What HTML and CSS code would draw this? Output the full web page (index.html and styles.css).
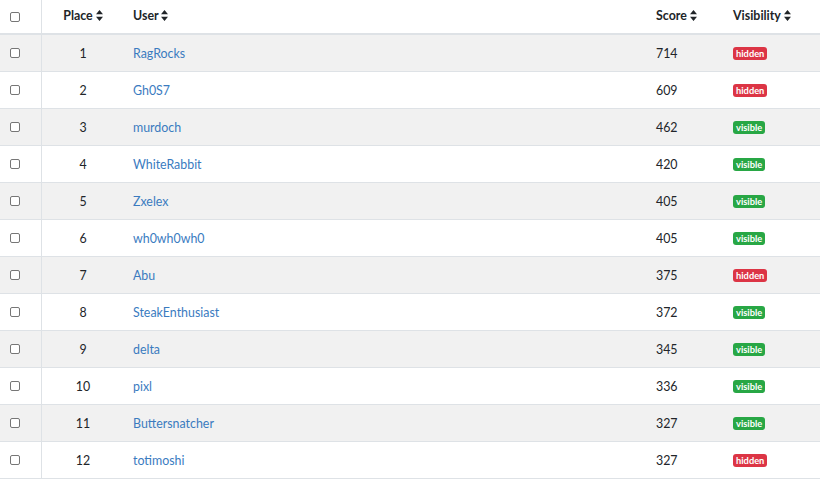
FILE: index.html
```html
<!DOCTYPE html>
<html>
<head>
<meta charset="utf-8">
<link rel="stylesheet" href="styles.css">
</head>
<body>
<table class="board">
  <thead>
    <tr>
      <th class="c-check"><span class="cb"></span></th>
      <th class="c-place">Place <svg class="sort" viewBox="0 0 7 11" width="7" height="11"><path d="M3.5 0 L7 4.3 H0 Z M3.5 11 L7 6.7 H0 Z" fill="#212529"/></svg></th>
      <th class="c-user">User <svg class="sort" viewBox="0 0 7 11" width="7" height="11"><path d="M3.5 0 L7 4.3 H0 Z M3.5 11 L7 6.7 H0 Z" fill="#212529"/></svg></th>
      <th class="c-score">Score <svg class="sort" viewBox="0 0 7 11" width="7" height="11"><path d="M3.5 0 L7 4.3 H0 Z M3.5 11 L7 6.7 H0 Z" fill="#212529"/></svg></th>
      <th class="c-vis">Visibility <svg class="sort" viewBox="0 0 7 11" width="7" height="11"><path d="M3.5 0 L7 4.3 H0 Z M3.5 11 L7 6.7 H0 Z" fill="#212529"/></svg></th>
    </tr>
  </thead>
  <tbody>
    <tr><td class="c-check"><span class="cb"></span></td><td class="c-place">1</td><td class="c-user"><a>RagRocks</a></td><td class="c-score">714</td><td class="c-vis"><span class="badge red">hidden</span></td></tr>
    <tr><td class="c-check"><span class="cb"></span></td><td class="c-place">2</td><td class="c-user"><a>Gh0S7</a></td><td class="c-score">609</td><td class="c-vis"><span class="badge red">hidden</span></td></tr>
    <tr><td class="c-check"><span class="cb"></span></td><td class="c-place">3</td><td class="c-user"><a>murdoch</a></td><td class="c-score">462</td><td class="c-vis"><span class="badge green">visible</span></td></tr>
    <tr><td class="c-check"><span class="cb"></span></td><td class="c-place">4</td><td class="c-user"><a>WhiteRabbit</a></td><td class="c-score">420</td><td class="c-vis"><span class="badge green">visible</span></td></tr>
    <tr><td class="c-check"><span class="cb"></span></td><td class="c-place">5</td><td class="c-user"><a>Zxelex</a></td><td class="c-score">405</td><td class="c-vis"><span class="badge green">visible</span></td></tr>
    <tr><td class="c-check"><span class="cb"></span></td><td class="c-place">6</td><td class="c-user"><a>wh0wh0wh0</a></td><td class="c-score">405</td><td class="c-vis"><span class="badge green">visible</span></td></tr>
    <tr><td class="c-check"><span class="cb"></span></td><td class="c-place">7</td><td class="c-user"><a>Abu</a></td><td class="c-score">375</td><td class="c-vis"><span class="badge red">hidden</span></td></tr>
    <tr><td class="c-check"><span class="cb"></span></td><td class="c-place">8</td><td class="c-user"><a>SteakEnthusiast</a></td><td class="c-score">372</td><td class="c-vis"><span class="badge green">visible</span></td></tr>
    <tr><td class="c-check"><span class="cb"></span></td><td class="c-place">9</td><td class="c-user"><a>delta</a></td><td class="c-score">345</td><td class="c-vis"><span class="badge green">visible</span></td></tr>
    <tr><td class="c-check"><span class="cb"></span></td><td class="c-place">10</td><td class="c-user"><a>pixl</a></td><td class="c-score">336</td><td class="c-vis"><span class="badge green">visible</span></td></tr>
    <tr><td class="c-check"><span class="cb"></span></td><td class="c-place">11</td><td class="c-user"><a>Buttersnatcher</a></td><td class="c-score">327</td><td class="c-vis"><span class="badge green">visible</span></td></tr>
    <tr><td class="c-check"><span class="cb"></span></td><td class="c-place">12</td><td class="c-user"><a>totimoshi</a></td><td class="c-score">327</td><td class="c-vis"><span class="badge red">hidden</span></td></tr>
  </tbody>
</table>
</body>
</html>
```

FILE: styles.css
```css
html, body {
  margin: 0;
  padding: 0;
  background: #fff;
}
body {
  font-family: Lato, "Open Sans", sans-serif;
  font-size: 12.4px;
  color: #212529;
  overflow: hidden;
}
.board {
  width: 820px;
  border-collapse: separate;
  border-spacing: 0;
  table-layout: fixed;
}
.board th, .board td {
  box-sizing: border-box;
  padding: 0 9px;
  vertical-align: middle;
  border-bottom: 1px solid #dee2e6;
  white-space: nowrap;
}
.board th {
  height: 35px;
  font-weight: 700;
  text-align: left;
  border-bottom: 2px solid #dee2e6;
  padding-bottom: 2px;
}
.board td {
  height: 37px;
}
.board tbody tr:nth-child(odd) td {
  background: #f1f1f1;
}
.c-check {
  width: 42px;
  padding: 0 0 0 10px !important;
  border-right: 1px solid #dee2e6;
}
.c-place {
  width: 82px;
  text-align: center !important;
}
.c-user { width: 523px; }
.c-score { width: 77px; }
.c-vis { width: 96px; }
.cb {
  display: block;
  box-sizing: border-box;
  width: 10px;
  height: 10px;
  border: 1px solid #767676;
  border-radius: 2px;
  background: #fff;
}
.sort {
  vertical-align: -1px;
  margin-left: 0;
}
a {
  color: #3a7bbf;
  text-decoration: none;
}
.badge {
  display: inline-block;
  box-sizing: border-box;
  height: 13px;
  line-height: 13px;
  padding: 0 3px;
  border-radius: 3px;
  font-size: 9.3px;
  font-weight: 700;
  color: #fff;
  vertical-align: 1px;
}
.badge.red { background: #dc3545; }
.badge.green { background: #28a745; }
```
